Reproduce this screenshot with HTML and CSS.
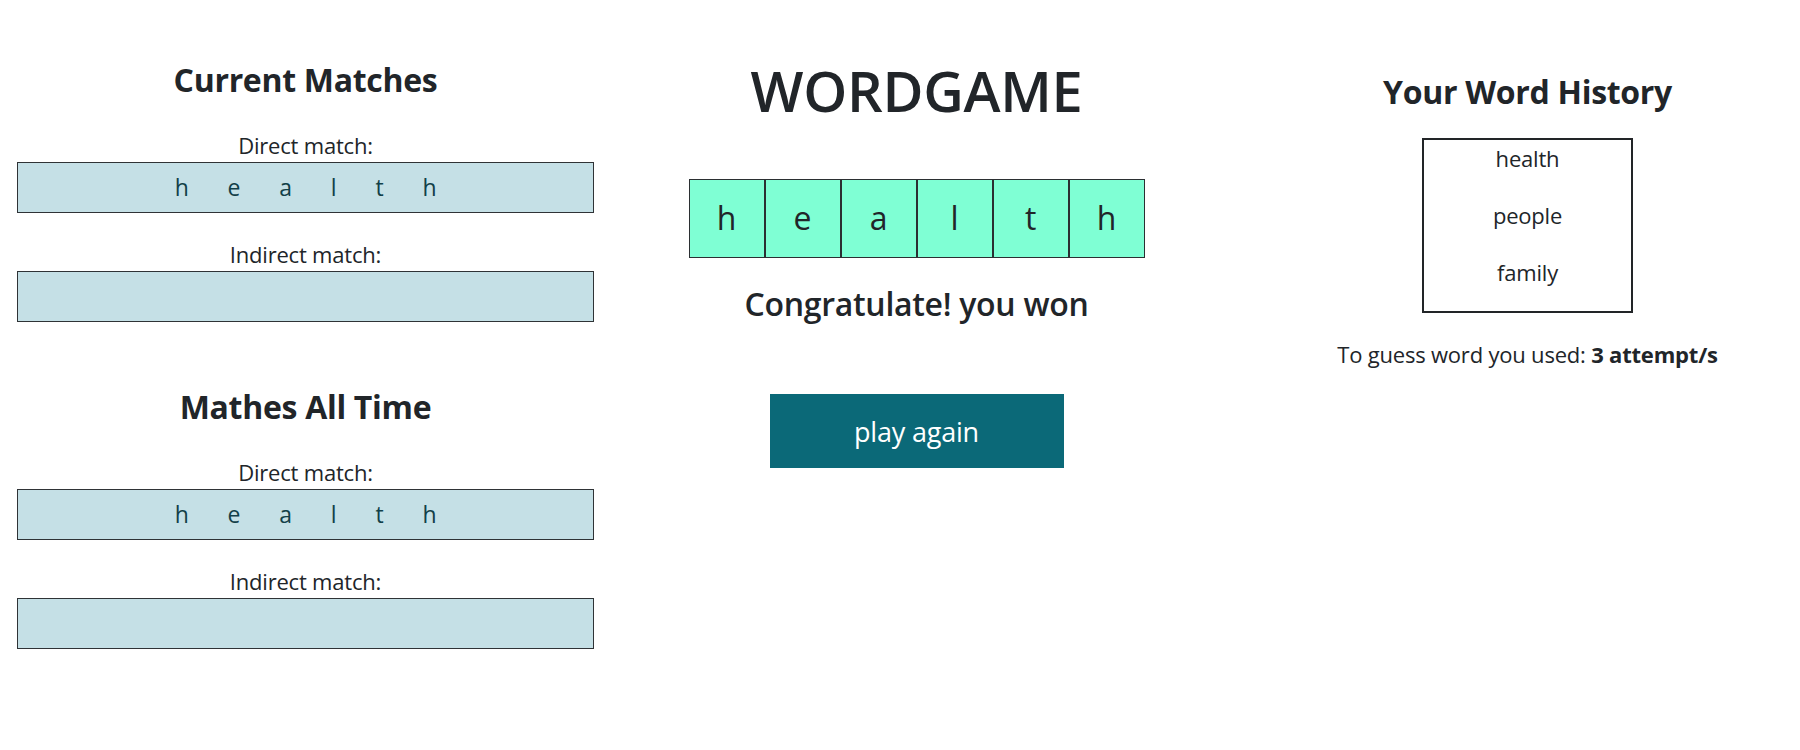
FILE: index.html
```html
<!DOCTYPE html>
<html lang="en">
<head>
<meta charset="utf-8">
<title>WORDGAME</title>
<link rel="stylesheet" href="styles.css">
</head>
<body>
<main class="layout">
  <section class="col col-left">
    <div class="matches">
      <h3 class="section-title">Current Matches</h3>
      <div class="field">
        <div class="field-label">Direct match:</div>
        <div class="match-box"><span>h</span><span>e</span><span>a</span><span>l</span><span>t</span><span>h</span></div>
      </div>
      <div class="field">
        <div class="field-label">Indirect match:</div>
        <div class="match-box"></div>
      </div>
    </div>
    <div class="matches">
      <h3 class="section-title">Mathes All Time</h3>
      <div class="field">
        <div class="field-label">Direct match:</div>
        <div class="match-box"><span>h</span><span>e</span><span>a</span><span>l</span><span>t</span><span>h</span></div>
      </div>
      <div class="field">
        <div class="field-label">Indirect match:</div>
        <div class="match-box"></div>
      </div>
    </div>
  </section>

  <section class="col col-mid">
    <h1 class="game-title">WORDGAME</h1>
    <div class="tiles">
      <div class="tile">h</div><div class="tile">e</div><div class="tile">a</div><div class="tile">l</div><div class="tile">t</div><div class="tile">h</div>
    </div>
    <h3 class="win-msg">Congratulate! you won</h3>
    <button class="play-btn" type="button">play again</button>
  </section>

  <section class="col col-right">
    <h3 class="section-title">Your Word History</h3>
    <div class="history">
      <p class="history-word">health</p>
      <p class="history-word">people</p>
      <p class="history-word">family</p>
    </div>
    <p class="attempts">To guess word you used: <strong>3 attempt/s</strong></p>
  </section>
</main>
</body>
</html>
```

FILE: styles.css
```css
html, body {
  margin: 0;
  padding: 0;
  overflow: hidden;
  background: #ffffff;
}

body {
  font-family: "Open Sans", "Noto Sans", sans-serif;
  font-size: 22px;
  color: #212529;
  letter-spacing: -0.2px;
}

.layout {
  display: grid;
  grid-template-columns: 611px 611px 611px;
  width: 1833px;
}

.col {
  display: flex;
  flex-direction: column;
  align-items: center;
  text-align: center;
}

/* ---------- left column ---------- */
.col-left {
  padding: 61px 17px 0 17px;
  align-items: stretch;
  gap: 66px;
}

.matches {
  display: flex;
  flex-direction: column;
  gap: 25px;
}

.section-title {
  margin: 0;
  font-size: 32px;
  line-height: 38px;
  font-weight: 700;
  letter-spacing: -0.3px;
}

.matches .section-title {
  margin-bottom: 5px;
}

.field {
  display: flex;
  flex-direction: column;
}

.field-label {
  line-height: 33px;
}

.match-box {
  box-sizing: border-box;
  height: 51px;
  background: #c5e0e6;
  border: 1px solid #2f3336;
  display: flex;
  justify-content: center;
  align-items: center;
  color: #123f48;
  font-size: 23px;
  line-height: 47px;
}

.match-box span {
  margin: 0 19.5px;
}

/* ---------- middle column ---------- */
.col-mid {
  padding-top: 56px;
}

.game-title {
  margin: 0;
  font-size: 56px;
  line-height: 68px;
  font-weight: 600;
  letter-spacing: -0.3px;
}

.tiles {
  display: flex;
  margin-top: 55px;
}

.tile {
  box-sizing: border-box;
  width: 76px;
  height: 79px;
  background: #7fffd4;
  border: 1px solid #2b2f32;
  font-size: 32px;
  line-height: 75px;
  text-align: center;
}

.win-msg {
  margin: 27px 0 0 0;
  font-size: 32px;
  line-height: 38px;
  font-weight: 600;
  letter-spacing: -0.3px;
}

.play-btn {
  margin-top: 71px;
  width: 294px;
  height: 74px;
  border: none;
  background: #0b6978;
  color: #ffffff;
  font-family: "Open Sans", "Noto Sans", sans-serif;
  font-size: 27px;
  letter-spacing: -0.2px;
  padding: 0;
  cursor: pointer;
}

/* ---------- right column ---------- */
.col-right {
  padding-top: 73px;
}

.history {
  box-sizing: border-box;
  margin-top: 27px;
  width: 211px;
  height: 175px;
  border: 2px solid #222528;
  padding-top: 2px;
}

.history-word {
  margin: 0 0 24px 0;
  line-height: 33px;
}

.attempts {
  margin: 25px 0 0 0;
  line-height: 33px;
}

.attempts strong {
  font-weight: 700;
}
```
